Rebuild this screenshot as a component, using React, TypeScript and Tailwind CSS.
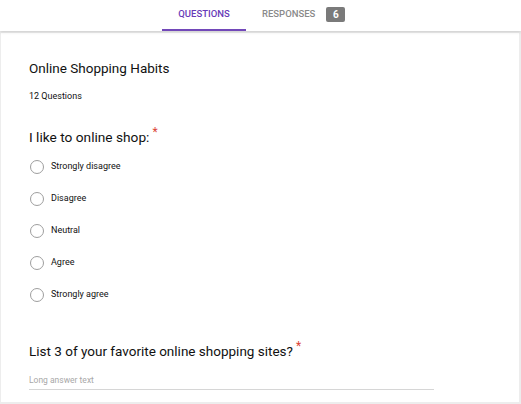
import React from "react";

const options = ["Strongly disagree", "Disagree", "Neutral", "Agree", "Strongly agree"];

export default function App() {
  return (
    <div
      className="w-[521px] h-[404px] bg-[#ededed] flex flex-col overflow-hidden"
      style={{ fontFamily: "Roboto, 'Liberation Sans', sans-serif" }}
    >
      <div className="relative z-10 h-[31px] bg-white flex pl-[162px] shadow-[0_1px_3px_rgba(0,0,0,0.15)] shrink-0">
        <div className="flex items-stretch">
          <div className="w-[84px] flex items-center justify-center border-b-[2px] border-[#7248b9] text-[9.5px] font-medium text-[#673ab7]">
            QUESTIONS
          </div>
          <div className="flex items-center pl-[16px] pb-[2px] text-[9.5px] font-medium text-[#8a8a8a]">
            RESPONSES
            <span className="ml-[11px] w-[19px] h-[15px] rounded-[2px] bg-[#7a7a7a] text-white text-[10px] font-bold flex items-center justify-center">
              6
            </span>
          </div>
        </div>
      </div>
      <div className="flex-1 bg-white ml-[1px] mr-[2px] mb-[2px] mt-[2px] pl-[28px] pt-[26px]">
        <div className="text-[13.5px] text-[#111] leading-[18px]">Online Shopping Habits</div>
        <div className="mt-[13px] text-[9px] text-[#111] leading-[12px]">12 Questions</div>
        <div className="mt-[26px] text-[13.7px] text-[#111] leading-[18px] flex">
          I like to online shop:
          <span className="text-[#db4437] text-[12px] leading-[12px] ml-[3px] -mt-[2px]">*</span>
        </div>
        <div className="mt-[5px] flex flex-col">
          {options.map((o) => (
            <div key={o} className="h-[32px] flex items-center">
              <span className="w-[14px] h-[14px] rounded-full border-[1.5px] border-[#9e9e9e] ml-[1px]" />
              <span className="ml-[7px] text-[9px] text-[#111]">{o}</span>
            </div>
          ))}
        </div>
        <div className="mt-[31px] text-[13.5px] text-[#111] leading-[18px] flex">
          List 3 of your favorite online shopping sites?
          <span className="text-[#db4437] text-[12px] leading-[12px] ml-[3px] -mt-[2px]">*</span>
        </div>
        <div className="mt-[14px] w-[405px] border-b border-[#d6d6d6] pb-[3px] text-[8.5px] leading-[12px] text-[#a8a8a8]">
          Long answer text
        </div>
      </div>
    </div>
  );
}
